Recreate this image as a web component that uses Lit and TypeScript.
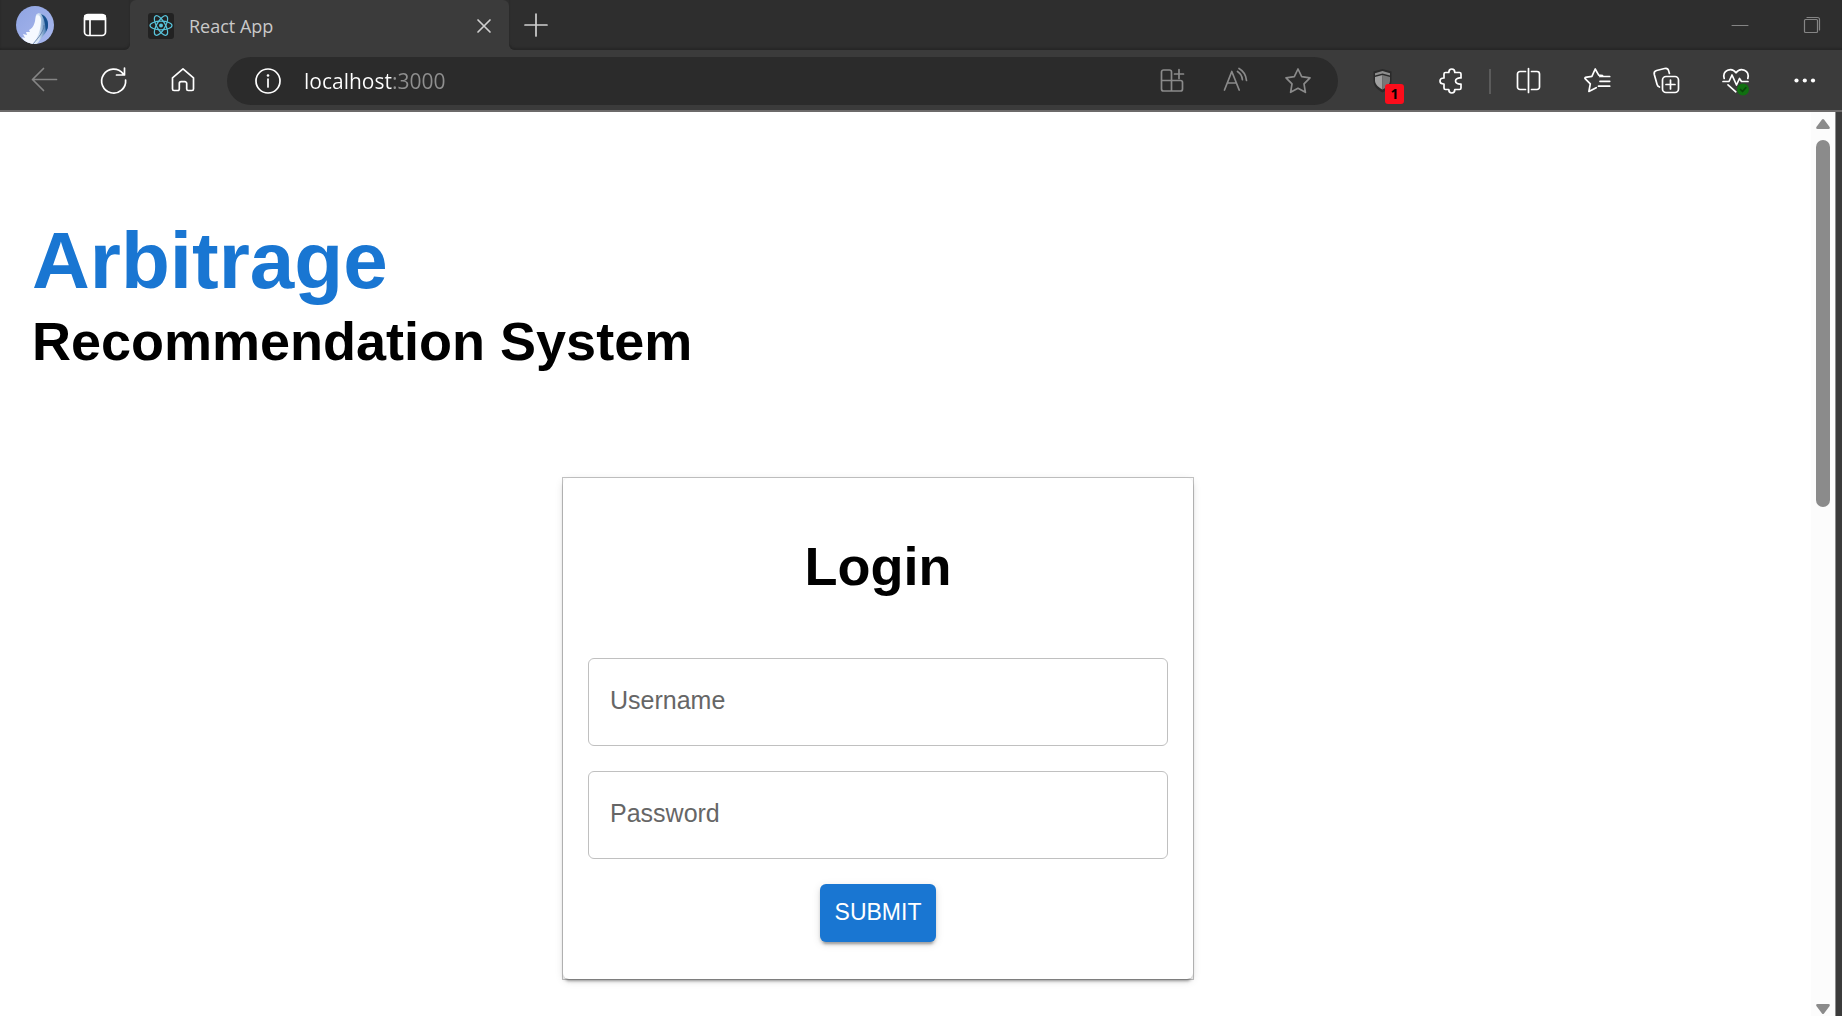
import { LitElement, html, css, svg } from "lit";
import { customElement, property, state } from "lit/decorators.js";

const icons: Record<string, unknown> = {
  tabs: svg`<rect x="4.5" y="4.5" width="21" height="21" rx="3.5"/><path d="M5 5.500h20v4H5z" fill="currentColor"/><path d="M10 10v15"/>`,
  close: svg`<path d="M9 9l12 12M21 9L9 21"/>`,
  plus: svg`<path d="M15 4v22M4 15h22"/>`,
  minimize: svg`<path d="M7 15.500h16" stroke-width="1"/>`,
  restore: svg`<g stroke-width="1.200"><rect x="7.500" y="9.500" width="13" height="13" rx="1"/><path d="M10 7.500h10.500a2 2 0 0 1 2 2V20"/></g>`,
  back: svg`<path d="M26.500 13.500H2.500M13.500 2.500L2.500 13.500l11 11"/>`,
  refresh: svg`<path d="M26.600 14A12 12 0 1 1 24 7.600M25.500 2v7h-8"/>`,
  home: svg`<path d="M15 2.800L4.500 11.800V23a1.500 1.500 0 0 0 1.500 1.500h3.800a1.500 1.500 0 0 0 1.500-1.500v-5.500a1.800 1.800 0 0 1 1.800-1.800h3.800a1.800 1.800 0 0 1 1.800 1.800V23a1.500 1.500 0 0 0 1.500 1.500H24a1.500 1.500 0 0 0 1.500-1.500V11.800z"/>`,
  info: svg`<circle cx="15" cy="15" r="12"/><path d="M15 13v8"/><circle cx="15" cy="9.500" r="1.300" fill="currentColor" stroke="none"/>`,
  apps: svg`<path d="M14.500 14.500V6a2 2 0 0 0-2-2H6.500a2 2 0 0 0-2 2v17a2 2 0 0 0 2 2h17a2 2 0 0 0 2-2v-6.500a2 2 0 0 0-2-2H4.500M14.500 14.500V25M22 3.500v9M17.500 8h9"/>`,
  read: svg`<path d="M4.500 24L11.800 5.500 19.200 24M7.300 17h9.200M17.500 5.500c3 1.800 4.600 4.600 4.900 8.200M19 2.500c4.600 2.600 7 6.600 7.500 12"/>`,
  star: svg`<path d="M15 3l3.700 7.700 8.300 1.200-6 6 1.400 8.400L15 22.300 7.600 26.300 9 17.900l-6-6 8.300-1.200z"/>`,
  shield: svg`<path d="M5.500 5.500l9-2.500 9 2.500v9.500c0 5-4 9-9 11.500-5-2.500-9-6.500-9-11.500z" fill="#2a2a2a" stroke="none"/><path d="M7 7.200l7.500-2.200 7.500 2.200v2.300l-7.500-2-7.500 2z" fill="#8d8d8d" stroke="none"/><path d="M7 11l7.500-2v14.500c-4-2-7.500-5-7.500-9z" fill="#a0a0a0" stroke="none"/><path d="M22 11l-7.500-2v14.500c4-2 7.500-5 7.500-9z" fill="#777777" stroke="none"/>`,
  puzzle: svg`<path d="M8.500 6.500h3.300c0-2 1-3.500 3-3.500s3 1.500 3 3.500h4.700a1.500 1.500 0 0 1 1.500 1.500v4c-2.500-.3-5.500.4-5.500 3s3 3.300 5.500 3v4a1.500 1.500 0 0 1-1.500 1.500h-4.700c0 2-1 3.500-3 3.500s-3-1.500-3-3.500H8.500A1.500 1.500 0 0 1 7 22v-4c-2.200 0-4-1-4-3s1.800-3 4-3V8a1.500 1.500 0 0 1 1.500-1.500z"/>`,
  split: svg`<path d="M14.500 2.500v24M11.500 5.500H6A2.500 2.500 0 0 0 3.500 8v13A2.500 2.500 0 0 0 6 23.500h5.500M17.500 5.500H23A2.500 2.500 0 0 1 25.500 8v13a2.500 2.500 0 0 1-2.500 2.500h-5.500"/>`,
  favorites: svg`<path d="M19.500 9.700l-3.800-.6L12.200 3 8.900 10.300 2.500 11.400a.8.8 0 0 0-.4 1.300l5.200 5.200-1.400 7.500 7.300-3.700M16.700 10.500h10M17 15.300h9.700M15.500 20.200h11.200"/>`,
  collections: svg`<rect x="10.500" y="10.500" width="16" height="16" rx="3.500"/><path d="M18.500 14v9M14 18.500h9M7.500 21c-1.400-.5-2-1.200-2.400-2.600L2.300 8.500c-.5-2 .3-3.400 2.300-4l8-2c2-.5 3.500.2 4 2.100l.8 2.900"/>`,
  health: svg`<path d="M3.200 12.500C1 4.500 10.500.500 15 6.800 19.500.500 29 4.500 26.800 12.500M2 15.500h6l3-6.500 4.500 10 3-6.500 2 3H27M7 18.800l7.800 7"/><circle cx="22" cy="23.500" r="6" fill="#107010" stroke="none"/><path d="M19.500 23.500l2 2 3.300-3.800" stroke="#0a450a"/>`,
  more: svg`<g fill="currentColor" stroke="none"><circle cx="6.500" cy="14.500" r="2.100"/><circle cx="14.800" cy="14.500" r="2.100"/><circle cx="23" cy="14.500" r="2.100"/></g>`,
};

@customElement("line-icon")
class LineIcon extends LitElement {
  @property() name = "";
  static styles = css`
    :host { display: block; width: 30px; height: 30px; }
    .glyph {
      display: block; width: 30px; height: 30px;
      fill: none; stroke: currentColor; stroke-width: 1.7;
      stroke-linecap: round; stroke-linejoin: round;
    }
  `;
  render() {
    return html`<svg class="glyph" viewBox="0 0 30 30" aria-hidden="true">${icons[this.name]}</svg>`;
  }
}

@customElement("browser-chrome")
class BrowserChrome extends LitElement {
  static styles = css`
    :host {
      display: block; color: #ffffff; background: #3b3b3b;
      font-family: "Open Sans", "Noto Sans", sans-serif;
      border-bottom: 2px solid #6c6a6a;
    }
    button {
      display: flex; align-items: center; justify-content: center;
      border: 0; padding: 0; background: none; color: inherit; font: inherit;
    }
    .strip { display: flex; height: 50px; }
    .lead, .rest {
      display: flex; align-items: center; background: #2e2e2e;
      box-shadow: inset 0 -2px 2px #262626;
    }
    .lead { width: 130px; gap: 26px; padding-left: 16px; box-sizing: border-box; border-bottom-right-radius: 6px; }
    .rest { flex: 1; border-bottom-left-radius: 6px; }
    .avatar { display: block; width: 38px; height: 38px; }
    .lead .small { width: 30px; }
    .corner { width: 379px; background: #2e2e2e; }
    .tab {
      display: flex; align-items: center; gap: 15px; height: 50px; box-sizing: border-box;
      padding: 1px 0 0 18px; background: #3b3b3b; border-radius: 6px 6px 0 0;
    }
    .favicon { display: block; width: 26px; height: 26px; }
    .title { flex: 1; font-size: 18px; line-height: 24px; color: #c9c9c9; }
    .tab .small { width: 50px; color: #cfcfcf; }
    .rest .small { width: 54px; color: #cfcfcf; }
    .spacer { flex: 1; }
    .window { width: 84px; height: 50px; color: #858585; }
    .edge { width: 60px; }
    .bar { display: flex; align-items: center; height: 48px; padding: 7px 3px 5px 10px; }
    .tool { position: relative; width: 69px; height: 48px; }
    .dim { color: #858585; }
    .address {
      flex: 1; min-width: 0; display: flex; align-items: center; height: 48px;
      margin: 0 10px; padding: 0 9px 0 26px; box-sizing: border-box;
      border-radius: 24px; background: #2b2b2b;
    }
    .url {
      flex: 1; min-width: 0; margin: 0 0 0 21px; padding: 0; border: 0; outline: 0;
      font: inherit; font-size: 21px; line-height: 30px; color: transparent;
      background: linear-gradient(90deg, #ffffff 88px, #8f8f8f 88px);
      -webkit-background-clip: text; background-clip: text;
    }
    .inner { width: 63px; height: 48px; color: #8a8a8a; }
    .rule { width: 2px; height: 25px; margin: 0 3px; background: #5b5b5b; }
    .badge {
      position: absolute; left: 37px; top: 27px; width: 19px; height: 20px;
      border-radius: 3px; background: #fc0d1b; color: #000000;
      font-size: 14px; line-height: 20px; font-weight: 700; text-align: center;
    }
  `;

  render() {
    return html`
      <div class="strip">
        <div class="lead">
          <svg class="avatar" viewBox="0 0 38 38" role="img" aria-label="Profile">
            <defs>
              <linearGradient id="sky" x1="0" y1="0" x2="1" y2="1"><stop offset="0" stop-color="#8fa4e2"/><stop offset="1" stop-color="#a9b8ee"/></linearGradient>
              <linearGradient id="wing" x1="0" y1="0" x2="1" y2="0"><stop offset="0" stop-color="#f4f8ff"/><stop offset="0.550" stop-color="#d3e2f3"/><stop offset="1" stop-color="#1f5c9e"/></linearGradient>
              <clipPath id="disc"><circle cx="19" cy="19" r="19"/></clipPath>
            </defs>
            <g clip-path="url(#disc)">
              <rect width="38" height="38" fill="url(#sky)"/>
              <path d="M20 9c1-2 4-2 6-1 4 2 6 6 6 11 0 4-2 8-5 11l-6 8H12l6-14c2-5 1-11 2-15z" fill="url(#wing)"/>
              <path d="M25 8c5 2 7 7 7 11 0 3-1 5-2 6-1-6-1-12-5-17z" fill="#174f8e"/>
              <path d="M20 10c2-2 5 0 5 4 0 9-3 17-8 24h-5c-3-3-5-4-6-7l3 1-2-4 4 1-1-3 4 0-1-2c5-2 6-8 7-14z" fill="#f5f9ff"/>
              <path d="M28 19c0 6-5 12-11 19" fill="none" stroke="#54749f" stroke-width="0.800"/>
            </g>
          </svg>
          <button class="small" aria-label="Tab actions"><line-icon name="tabs"></line-icon></button>
        </div>
        <div class="corner">
          <div class="tab">
            <svg class="favicon" viewBox="0 0 26 26" aria-hidden="true">
              <rect width="26" height="26" rx="3" fill="#222222"/>
              <g fill="none" stroke="#58c4dc" stroke-width="1.200" transform="translate(13 12.500)">
                <ellipse rx="11" ry="4.300"/><ellipse rx="11" ry="4.300" transform="rotate(60)"/><ellipse rx="11" ry="4.300" transform="rotate(120)"/>
                <circle r="2" fill="#58c4dc" stroke="none"/>
              </g>
            </svg>
            <span class="title">React App</span>
            <button class="small" aria-label="Close tab"><line-icon name="close"></line-icon></button>
          </div>
        </div>
        <div class="rest">
          <button class="small" aria-label="New tab"><line-icon name="plus"></line-icon></button>
          <span class="spacer"></span>
          <button class="window" aria-label="Minimize"><line-icon name="minimize"></line-icon></button>
          <button class="window edge" aria-label="Restore"><line-icon name="restore"></line-icon></button>
        </div>
      </div>
      <div class="bar">
        <button class="tool dim" aria-label="Back"><line-icon name="back"></line-icon></button>
        <button class="tool" aria-label="Refresh"><line-icon name="refresh"></line-icon></button>
        <button class="tool" aria-label="Home"><line-icon name="home"></line-icon></button>
        <div class="address">
          <button aria-label="Site information"><line-icon name="info"></line-icon></button>
          <input class="url" type="text" aria-label="Address" .value=${"localhost:3000"} spellcheck="false" />
          <button class="inner" aria-label="Install app"><line-icon name="apps"></line-icon></button>
          <button class="inner" aria-label="Read aloud"><line-icon name="read"></line-icon></button>
          <button class="inner" aria-label="Add to favorites"><line-icon name="star"></line-icon></button>
        </div>
        <button class="tool" aria-label="Shield extension"><line-icon name="shield"></line-icon><span class="badge">1</span></button>
        <button class="tool" aria-label="Extensions"><line-icon name="puzzle"></line-icon></button>
        <span class="rule"></span>
        <button class="tool" aria-label="Split screen"><line-icon name="split"></line-icon></button>
        <button class="tool" aria-label="Favorites"><line-icon name="favorites"></line-icon></button>
        <button class="tool" aria-label="Collections"><line-icon name="collections"></line-icon></button>
        <button class="tool" aria-label="Browser essentials"><line-icon name="health"></line-icon></button>
        <button class="tool" aria-label="Settings and more"><line-icon name="more"></line-icon></button>
      </div>
    `;
  }
}

@customElement("login-card")
class LoginCard extends LitElement {
  @state() private filled: Record<string, boolean> = {};

  static styles = css`
    :host { display: block; box-sizing: border-box; width: 632px; max-width: 100%; border: 1px solid #c4c4c4; }
    .card {
      display: flex; flex-direction: column; gap: 25px; padding: 25px 25px 37px;
      border-radius: 6px; background: #ffffff;
    }
    .card, .submit {
      box-shadow: 0 5px 2px -3px rgba(0, 0, 0, 0.2), 0 3px 3px rgba(0, 0, 0, 0.14), 0 2px 8px rgba(0, 0, 0, 0.12);
    }
    .heading { margin: 32px 0 35px; font-size: 54px; line-height: 63px; font-weight: 700; text-align: center; color: #000000; }
    .field { display: grid; height: 88px; }
    .label {
      grid-area: 1 / 1; z-index: 1; pointer-events: none; justify-self: start;
      padding-left: 22px; font-size: 25px; line-height: 84px; color: #666666;
    }
    .hidden { visibility: hidden; }
    .input {
      grid-area: 1 / 1; box-sizing: border-box; width: 100%; height: 88px; padding: 0 21px;
      border: 1px solid #c0c0c0; border-radius: 6px; background: transparent;
      font: inherit; font-size: 25px; color: #222222;
    }
    .submit {
      align-self: center; height: 58px; padding: 0 15px 2px; border: 0; border-radius: 6px;
      background: #1976d2; color: #ffffff; font: inherit; font-size: 23px; line-height: 56px;
    }
  `;

  private onInput(id: string, e: Event) {
    this.filled = { ...this.filled, [id]: (e.target as HTMLInputElement).value !== "" };
  }

  private field(id: string, label: string, type: string) {
    return html`
      <div class="field">
        <label class="label ${this.filled[id] ? "hidden" : ""}" for=${id}>${label}</label>
        <input class="input" id=${id} type=${type} @input=${(e: Event) => this.onInput(id, e)} />
      </div>
    `;
  }

  render() {
    return html`
      <form class="card" @submit=${(e: Event) => e.preventDefault()}>
        <h2 class="heading">Login</h2>
        ${this.field("username", "Username", "text")}
        ${this.field("password", "Password", "password")}
        <button class="submit" type="submit">SUBMIT</button>
      </form>
    `;
  }
}

@customElement("app-root")
class AppRoot extends LitElement {
  static styles = css`
    :host {
      display: flex; flex-direction: column; min-height: 100vh;
      background: #3b3b3b; font-family: "Liberation Sans", Arial, sans-serif;
    }
    .view { flex: 1; display: flex; margin-right: 6px; border-right: 1px solid #8c8c8c; background: #ffffff; }
    .page { flex: 1; min-width: 0; box-sizing: border-box; padding: 100px 87px 36px 32px; }
    .brand { margin: 0; font-size: 80px; line-height: 98px; font-weight: 700; color: #1976d2; }
    .tagline { margin: 0; font-size: 54px; line-height: 62px; font-weight: 700; color: #000000; }
    .center { display: flex; justify-content: center; margin-top: 105px; }
    .scroll {
      display: flex; flex-direction: column; align-items: center; gap: 11px;
      width: 24px; padding: 7px 0 2px; box-sizing: border-box; background: #fcfcfc;
    }
    .arrow { display: block; width: 14px; height: 10px; fill: #8b8b8b; }
    .track { flex: 1; width: 14px; }
    .thumb { height: 43%; border-radius: 7px; background: #8b8b8b; }
  `;

  render() {
    return html`
      <browser-chrome></browser-chrome>
      <div class="view">
        <main class="page">
          <h1 class="brand">Arbitrage</h1>
          <p class="tagline">Recommendation System</p>
          <div class="center"><login-card></login-card></div>
        </main>
        <div class="scroll" aria-hidden="true">
          <svg class="arrow" viewBox="0 0 14 10"><path d="M6 .6Q7-.4 8 .6L13.600 8Q14.400 10 12.500 10H1.500Q-.4 10 .4 8z"/></svg>
          <div class="track"><div class="thumb"></div></div>
          <svg class="arrow" viewBox="0 0 14 10"><path d="M6 9.400Q7 10.400 8 9.400L13.600 2Q14.400 0 12.500 0H1.500Q-.4 0 .4 2z"/></svg>
        </div>
      </div>
    `;
  }
}
